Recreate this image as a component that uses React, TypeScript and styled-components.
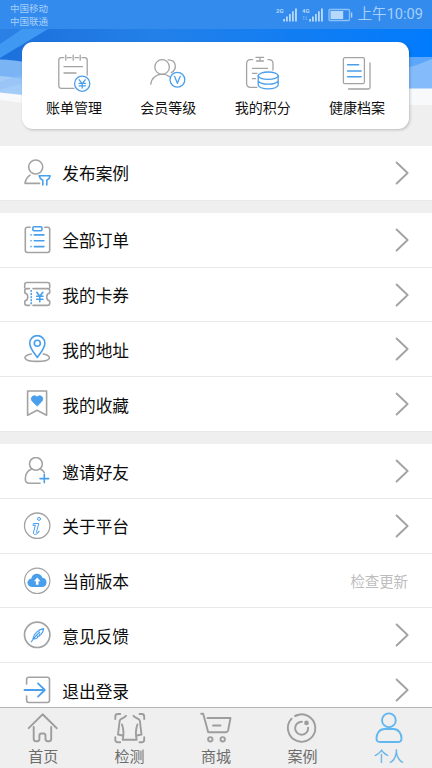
import React from 'react';
import styled, { createGlobalStyle } from 'styled-components';

const GREY = '#a3a3a3';
const BLUE = '#4a9fec';

const GlobalStyle = createGlobalStyle`
  * { box-sizing: border-box; }
  html, body { margin: 0; padding: 0; }
  body {
    font-family: 'Noto Sans CJK SC', 'Noto Sans', sans-serif;
    background: #efefef;
    overflow: hidden;
  }
`;

const Screen = styled.div`
  position: relative;
  display: flex;
  flex-direction: column;
  width: 432px;
  height: 768px;
  overflow: hidden;
  background: #efefef;
`;

const Waves = styled.svg`
  position: absolute;
  top: 0;
  left: 0;
`;

const StatusBar = styled.header`
  position: relative;
  display: flex;
  flex: none;
  justify-content: space-between;
  height: 29px;
  padding: 0 9px 0 10px;
  color: #a6cffa;
  background: #338bed;
`;

const Carriers = styled.div`
  display: flex;
  flex-direction: column;
  padding-top: 2px;
  font-size: 9.5px;
  line-height: 13px;
`;

const Indicators = styled.div`
  display: flex;
  align-items: center;
  gap: 4px;
`;

const Clock = styled.span`
  font-family: Roboto, 'Noto Sans CJK SC', sans-serif;
  font-size: 14.6px;
  line-height: 29px;
  white-space: nowrap;
`;

const Content = styled.main`
  position: relative;
  display: flex;
  flex: 1;
  flex-direction: column;
  min-height: 0;
  overflow: hidden;
`;

const Card = styled.nav`
  display: grid;
  flex: none;
  grid-template-columns: repeat(4, 94.3px);
  justify-content: center;
  height: 87px;
  margin: 13px 23px 17px 22px;
  background: #fff;
  border-radius: 11px;
  box-shadow: 1px 1px 3px rgba(0, 0, 0, 0.22);
`;

const CardItem = styled.div`
  display: flex;
  flex-direction: column;
  align-items: center;
  padding-top: 11px;
  font-size: 14px;
  line-height: 20px;
  color: #111;
  white-space: nowrap;
  svg { flex: none; margin-bottom: 4px; }
`;

const Group = styled.section`
  flex: none;
  margin-bottom: 12.2px;
`;

const Row = styled.div`
  display: flex;
  align-items: center;
  height: 54.75px;
  padding: 0 23px;
  background: #fff;
  border-bottom: 1px solid #e9e9e9;
`;

const RowLabel = styled.span`
  flex: 1;
  margin-left: 11.3px;
  padding-top: 1px;
  font-size: 16.7px;
  line-height: 24px;
  color: #0c0c0c;
`;

const RowNote = styled.span`
  margin-right: 1px;
  font-size: 14.4px;
  color: #bdbdbd;
`;

const TabBar = styled.footer`
  position: relative;
  display: grid;
  flex: none;
  grid-template-columns: repeat(5, 1fr);
  height: 61px;
  background: #efefef;
  border-top: 1px solid #b5b5b5;
`;

const Tab = styled.div<{ $active?: boolean }>`
  display: flex;
  flex-direction: column;
  align-items: center;
  padding-top: 3px;
  font-size: 15px;
  line-height: 20px;
  color: ${(p) => (p.$active ? '#5eb2e8' : '#6c6c6c')};
  svg { flex: none; margin-bottom: 1px; stroke: ${(p) => (p.$active ? '#62b8ee' : '#9d9d9d')}; }
`;

const LineIcon = styled.svg<{ $weight?: number }>`
  display: block;
  flex: none;
  fill: none;
  stroke: ${GREY};
  stroke-width: ${(p) => p.$weight ?? 1.6};
  stroke-linecap: round;
  stroke-linejoin: round;
`;

const Accent = styled.g`
  stroke: ${BLUE};
`;

const Signal = ({ label, data }: { label: string; data?: boolean }) => (
  <svg width="22" height="16" viewBox="0 0 22 16" fill="#b5d8fb">
    <text x="0" y="6" fontSize="6" fontWeight="700" fontFamily="Roboto, sans-serif">{label}</text>
    {data && <path d="M1.8 13V9M4.2 9v4M.8 10l1-1M5.2 12l-1 1" stroke="#7db7f5" strokeWidth=".7" />}
    <path d="M7.2 12h1.8v2.5H7.2zM10 9.5h1.8v5H10zM13 7h1.8v7.5H13zM16 4.3h1.8v10.2H16zM19 1.6h1.9v12.9H19z" />
  </svg>
);

const Battery = () => (
  <svg width="25" height="14" viewBox="0 0 25 14" fill="none">
    <rect x="1" y="1.5" width="20.5" height="11" rx="1" stroke="#8dc1f7" strokeWidth="1.3" />
    <path d="M2.5 3h12.7v8H2.5z" fill="#b5d8fb" />
    <path d="M23.6 4.5v5" stroke="#a6cffa" strokeWidth="1.4" />
  </svg>
);

const cardItems = [
  {
    label: '账单管理',
    icon: (
      <>
        <path d="M20 35.3H7.3q-2.5 0-2.5-2.5V7.2q0-2.5 2.5-2.5h2.5M13.5 4.7h3.7M21 4.7h3.4M28 4.7h2.7q2.5 0 2.5 2.5V22M11.8 2.2v5M19.2 2.2v5M26.2 2.2v5M10 13.7h18.5M10 20h12" />
        <Accent>
          <circle cx="28.2" cy="30.7" r="7.6" />
          <path d="m25.2 26.8 3 3.8 3-3.8M28.2 30.6v4.5M25 30.4h6.4M25 32.8h6.4" />
        </Accent>
      </>
    ),
  },
  {
    label: '会员等级',
    icon: (
      <>
        <circle cx="14.1" cy="14" r="7.3" />
        <path d="M20 6.8c9.5.2 8.8 10 3.2 13M2.8 31.2c.5-6 5.5-10 11.3-10 3 0 5.2.8 7.2 2.4" />
        <Accent>
          <circle cx="29.4" cy="26.7" r="7.4" />
          <path d="m26.5 23.3 2.9 7 2.9-7" />
        </Accent>
      </>
    ),
  },
  {
    label: '我的积分',
    icon: (
      <>
        <path d="M14 34.3H7.6q-4 0-4-4V10.7q0-4 4-4h2M25 6.7h1q4 0 4 4V17M13 4.4h7.6M13.5 8h7M17 4.4V8M9.5 15.3h15M9.5 20.3H14M9.5 25.7h3" />
        <Accent>
          <ellipse cx="25.2" cy="22.7" rx="10" ry="3.7" />
          <path d="M15.2 22.7v9.4c0 2 4.4 3.8 10 3.8s10-1.8 10-3.8v-9.4M15.2 27.4c0 2 4.4 3.8 10 3.8s10-1.8 10-3.8" />
        </Accent>
      </>
    ),
  },
  {
    label: '健康档案',
    icon: (
      <>
        <rect x="6.4" y="4.7" width="21" height="26" rx="1.5" />
        <path d="M33 10v24.5q0 1.5-1.5 1.5H11.5" />
        <Accent strokeWidth="1.6">
          <path d="M10.6 11.7h11M10.6 18h13.5M10.6 23.8h13.5" />
        </Accent>
      </>
    ),
  },
];

type Item = { label: string; note?: string; icon: React.ReactNode };

const groups: Item[][] = [
  [
    {
      label: '发布案例',
      icon: (
        <>
          <circle cx="12.7" cy="8" r="7" />
          <path d="M7 16.2c-2.6 1.8-4.4 4.4-5 8.2h14.5" />
          <Accent>
            <path d="M19.8 26v-4.700c-1.800-1-3.300-2.300-3.600-4.500h10.900c-.3 2.200-1.500 3.500-3.300 4.500v4.700" />
          </Accent>
        </>
      ),
    },
  ],
  [
    {
      label: '全部订单',
      icon: (
        <>
          <path d="M7.2 1.3H4.5Q2.3 1.3 2.3 3.5v20.8q0 2.2 2.2 2.2h20q2.2 0 2.2-2.2V3.5q0-2.2-2.2-2.2h-2.7" />
          <Accent>
            <rect x="9.9" y=".8" width="9" height="3.9" rx="1" />
            <path d="M8 8.9h.1M11.3 8.9h9.6M8 14.7h.1M11.3 14.7h9.6M8 20.6h.1M11.3 20.6h9.6" />
          </Accent>
        </>
      ),
    },
    {
      label: '我的卡券',
      icon: (
        <>
          <path d="M1.7 6.8V3.7q0-2.2 2.2-2.2h20.600q2.200 0 2.200 2.200v3.100M6.500 7.600H4q-2.200 0-2.200 2v2.400c4 .6 4 7.200 0 8v2.200q0 2.200 2.200 2.200h2.500M10 24.400h14.500q2.200 0 2.200-2.200V20c-4-.8-4-7.400 0-8V9.600q0-2-2.200-2H10" />
          <Accent>
            <path d="M8.200 9.500v13.800" strokeDasharray=".8 2.300" />
            <path d="m13.800 11.300 3 4 3-4M16.800 15.300v5.500M13.600 15.300H20M13.600 18.200H20" />
          </Accent>
        </>
      ),
    },
    {
      label: '我的地址',
      icon: (
        <>
          <path d="M8.200 19c-9.500 1.600-8.700 7.400 6 7.400s15.500-5.800 6-7.400" />
          <Accent>
            <path d="M14.300 22.500C11.500 18.500 6.700 13 6.700 8.200a7.600 7.600 0 0 1 15.200 0c0 4.800-4.800 10.300-7.600 14.300z" />
            <circle cx="14.300" cy="8.200" r="3" />
          </Accent>
        </>
      ),
    },
    {
      label: '我的收藏',
      icon: (
        <>
          <path d="M4.600 1h19v24.300l-9.500-5.100-9.500 5.100z" />
          <path d="m14.100 16-4.800-4.800C6.300 8 10.800 3.500 14.100 7c3.300-3.500 7.800 1 4.800 4.200z" fill={BLUE} strokeWidth=".8" stroke={BLUE} />
        </>
      ),
    },
  ],
  [
    {
      label: '邀请好友',
      icon: (
        <>
          <circle cx="12.900" cy="6.900" r="6.400" />
          <path d="M8.500 12C4.500 13.700 2.300 17.700 2.300 22q0 4.300 4.200 4.300H17M17.300 12c1.800.8 3 2 4 3.700" />
          <Accent>
            <path d="M21.300 17.200v8.600M17 21.600h8.700" />
          </Accent>
        </>
      ),
    },
    {
      label: '关于平台',
      icon: (
        <>
          <circle cx="14.200" cy="13.700" r="12.700" strokeWidth="1.300" />
          <Accent strokeWidth="1">
            <circle cx="16" cy="6.900" r="1.500" />
            <path d="M10.800 11.500h5l-2.300 8.300c-.3 1.300.8 1.100 2.700-.7-1.500 3.800-6.600 4.500-5.700 1.100l1.900-7.100-2 .3z" />
          </Accent>
        </>
      ),
    },
    {
      label: '当前版本',
      note: '检查更新',
      icon: (
        <>
          <circle cx="14.200" cy="13.800" r="12.700" strokeWidth="1.200" />
          <path d="M9.500 20c-6.500 0-6.500-7.600-1-8.500C9 5.700 17.800 5.200 19.400 10.700c5.600.2 5.600 9.300-.4 9.300z" fill={BLUE} stroke="none" />
          <path d="m14.200 10.500 3.200 3.700h-1.900v3.600h-2.600v-3.600H11z" fill="#fff" stroke="none" />
        </>
      ),
    },
    {
      label: '意见反馈',
      icon: (
        <>
          <circle cx="14.200" cy="13.800" r="12.700" strokeWidth="1.700" />
          <Accent strokeWidth="1.100">
            <path d="M8.300 20.800c2.500-4 5.300-7 8.500-9.800M9.800 18.200C10.500 13.500 15 8.500 20.600 7.600c-.2 2.700-.9 4.200-2.300 5.500l-1.800.3.400 1.500-2.500.5.200 1.300c-1.500.9-3 1.400-4.800 1.500" />
          </Accent>
        </>
      ),
    },
    {
      label: '退出登录',
      icon: (
        <>
          <path d="M3.600 8V3.500q0-2.200 2.200-2.200h18.500q2.200 0 2.200 2.200v20.800q0 2.200-2.200 2.200H5.800q-2.200 0-2.200-2.200V20" />
          <Accent strokeWidth="1.800">
            <path d="M1.500 14h20.300M15 7.400l6.800 6.600-6.800 6.600" />
          </Accent>
        </>
      ),
    },
  ],
];

const tabs = [
  {
    label: '首页',
    icon: <path d="m2.700 17.200 13.900-13.900 14.200 13.900M7.700 16v12q0 2.200 2.200 2.200h1.300q2.200 0 2.200-2.200v-3.300q0-2.200 2.200-2.200h1.700q2.200 0 2.200 2.200V28q0 2.200 2.200 2.200H23q2.200 0 2.200-2.200V16" />,
  },
  {
    label: '检测',
    icon: (
      <>
        <path d="M2.300 8V5.500q0-2.500 2.500-2.500h2.400M26.500 3h2.200q2.500 0 2.500 2.500V8M2.300 26.300v2.400q0 2.500 2.500 2.500h2.400M31.200 26.300v2.400q0 2.500-2.500 2.500h-2.200" />
        <path d="M13 4.800c-1.500 2.500-5.300 2.200-6.300 4.700L5 23.500l4.500 1M20.500 4.800c1.500 2.500 5.300 2.200 6.300 4.700l1.700 14-4.500 1M9 13.500c1.800 5 2 9.500.7 15.200h14c-1.300-5.700-1.100-10.200.7-15.200" />
      </>
    ),
  },
  {
    label: '商城',
    icon: (
      <>
        <path d="M2.200 2.700h2l5 18.500h17.700q1.700 0 2.200-1.700L31.500 7H8.500M14 14.500h7.500" />
        <circle cx="11.300" cy="28.300" r="2.200" />
        <circle cx="23.700" cy="28.300" r="2.200" />
      </>
    ),
  },
  {
    label: '案例',
    icon: (
      <>
        <path d="M6.600 7.700A13.700 13.700 0 1 0 10.300 4.900" />
        <path d="M10.300 4.900a13.700 13.700 0 0 1 3-1" />
        <path d="M16.900 10.700a6.500 6.500 0 1 0 6.200 6" />
        <circle cx="21.500" cy="11.900" r="1.400" fill="#9d9d9d" />
      </>
    ),
  },
  {
    label: '个人',
    active: true,
    icon: (
      <>
        <circle cx="16.900" cy="9.300" r="6.900" />
        <path d="M12.500 18h9c5 0 8 4.500 8 9.500q0 3.500-3.500 3.500H8q-3.500 0-3.500-3.500c0-5 3-9.500 8-9.500z" />
      </>
    ),
  },
];

export default function App() {
  return (
    <>
      <GlobalStyle />
      <Screen>
        <Waves width="432" height="146" viewBox="0 0 432 146">
          <defs>
            <linearGradient id="sky" x1="0" x2="1">
              <stop offset="0" stopColor="#1d70dc" />
              <stop offset=".35" stopColor="#2380e8" />
              <stop offset="1" stopColor="#017bfd" />
            </linearGradient>
          </defs>
          <path d="M0 0h432v110H0z" fill="url(#sky)" />
          <path d="M0 29h22L0 45z" fill="#2a80e4" />
          <path d="M0 44 22 29h26L0 58z" fill="#3f98f2" />
          <path d="M0 59.500q12 0 40 5v35H0z" fill="#7ab4f4" />
          <path d="M0 76q15 1 40 6v15H0z" fill="#a3ccf8" />
          <path d="M0 82q10-4 40-12v11Q15 84 0 90z" fill="#8fc0f6" opacity=".5" />
          <path d="M400 57h32v35h-32z" fill="#5ca7fb" />
          <path d="M400 70q16-4 32-11v33h-32z" fill="#83bbfb" />
          <path d="M0 92.500q12 1.500 40 4h360l9-8h23v20H0z" fill="#f8f9fa" />
          <path d="M0 100q14 2 40 5h392v41H0z" fill="#efefef" />
        </Waves>
        <StatusBar>
          <Carriers>
            <span>中国移动</span>
            <span>中国联通</span>
          </Carriers>
          <Indicators>
            <Signal label="2G" />
            <Signal label="4G" data />
            <Battery />
            <Clock>上午10:09</Clock>
          </Indicators>
        </StatusBar>
        <Content>
          <Card>
            {cardItems.map((item) => (
              <CardItem key={item.label}>
                <LineIcon width="40" height="40" viewBox="0 0 40 40" $weight={1.3}>{item.icon}</LineIcon>
                {item.label}
              </CardItem>
            ))}
          </Card>
          {groups.map((items) => (
            <Group key={items[0].label}>
              {items.map((item) => (
                <Row key={item.label}>
                  <LineIcon width="28" height="28" viewBox="0 0 28 28">{item.icon}</LineIcon>
                  <RowLabel>{item.label}</RowLabel>
                  {item.note ? (
                    <RowNote>{item.note}</RowNote>
                  ) : (
                    <LineIcon width="14" height="24" viewBox="0 0 14 24" $weight={1.9}>
                      <path d="m1.600 1.500 11 10.500-11 10.500" />
                    </LineIcon>
                  )}
                </Row>
              ))}
            </Group>
          ))}
        </Content>
        <TabBar>
          {tabs.map((tab) => (
            <Tab key={tab.label} $active={tab.active}>
              <LineIcon width="34" height="34" viewBox="0 0 34 34" $weight={1.9}>{tab.icon}</LineIcon>
              {tab.label}
            </Tab>
          ))}
        </TabBar>
      </Screen>
    </>
  );
}
